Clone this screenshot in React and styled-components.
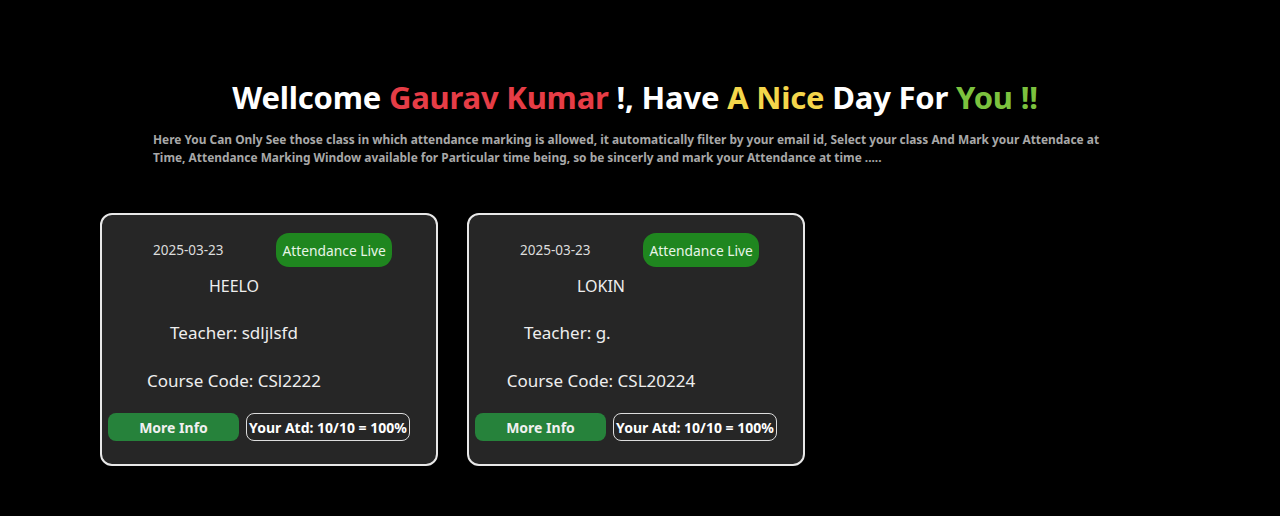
import React from "react";
import styled, { createGlobalStyle } from "styled-components";

const Global = createGlobalStyle`
  html, body {
    margin: 0;
    background: #000;
    font-family: "Noto Sans", "Open Sans", sans-serif;
  }
`;

const Page = styled.div`
  min-height: 516px;
  padding-top: 76px;
  box-sizing: border-box;
`;

const Heading = styled.h1`
  margin: 0;
  padding-right: 10px;
  text-align: center;
  font-size: 31px;
  line-height: 42px;
  font-weight: 700;
  color: #fff;
  letter-spacing: -0.2px;
`;

const Tint = styled.span`
  color: ${(p) => p.$c};
`;

const Intro = styled.p`
  margin: 12px 0 0 153px;
  width: 960px;
  font-size: 11.9px;
  line-height: 18px;
  font-weight: 700;
  color: #a8a8a8;
`;

const CardList = styled.div`
  display: flex;
  gap: 29px;
  margin: 47px 0 0 100px;
`;

const Card = styled.div`
  width: 338px;
  height: 253px;
  box-sizing: border-box;
  border: 2px solid #e8e8e8;
  border-radius: 12px;
  background: #262626;
  padding-top: 18px;
  color: #eee;
`;

const TopRow = styled.div`
  display: flex;
  align-items: center;
  gap: 53px;
  padding-left: 51px;
`;

const DateText = styled.span`
  font-size: 13.5px;
  color: #ddd;
`;

const LiveBadge = styled.span`
  display: inline-flex;
  align-items: center;
  height: 34px;
  padding: 0 6px;
  border-radius: 13px;
  background: #1f861f;
  color: #e8f5e8;
  font-size: 13.8px;
`;

const InfoCol = styled.div`
  width: 264px;
  text-align: center;
`;

const Title = styled.div`
  margin-top: 8px;
  font-size: 16px;
  line-height: 22px;
`;

const InfoLine = styled.div`
  margin-top: 24px;
  font-size: 17px;
  line-height: 24px;
`;

const Hidden = styled.span`
  color: transparent;
`;

const Actions = styled.div`
  display: flex;
  gap: 7px;
  margin: 20px 0 0 6px;
`;

const MoreBtn = styled.button`
  width: 131px;
  height: 28px;
  border: none;
  border-radius: 8px;
  background: #26823b;
  color: #f0f0f0;
  font-family: inherit;
  font-size: 14px;
  font-weight: 700;
`;

const AtdBox = styled.span`
  display: inline-flex;
  align-items: center;
  justify-content: center;
  width: 164px;
  height: 28px;
  box-sizing: border-box;
  border: 1px solid #ddd;
  border-radius: 8px;
  font-size: 14px;
  font-weight: 700;
  color: #fff;
`;

const classes = [
  { date: "2025-03-23", name: "HEELO", teacher: "sdljlsfd", hidden: "", code: "CSl2222" },
  { date: "2025-03-23", name: "LOKIN", teacher: "g.", hidden: " xxxxxxx", code: "CSL20224" },
];

export default function App() {
  return (
    <Page>
      <Global />
      <Heading>
        Wellcome <Tint $c="#e63d46">Gaurav Kumar</Tint> !, Have{" "}
        <Tint $c="#f4d64b">A Nice</Tint> Day For{" "}
        <Tint $c="#7cc23e">You !!</Tint>
      </Heading>
      <Intro>
        Here You Can Only See those class in which attendance marking is allowed, it
        automatically filter by your email id, Select your class And Mark your Attendace at
        Time, Attendance Marking Window available for Particular time being, so be sincerly and
        mark your Attendance at time .....
      </Intro>
      <CardList>
        {classes.map((c) => (
          <Card key={c.name}>
            <TopRow>
              <DateText>{c.date}</DateText>
              <LiveBadge>Attendance Live</LiveBadge>
            </TopRow>
            <InfoCol>
              <Title>{c.name}</Title>
              <InfoLine>
                Teacher: {c.teacher}
                <Hidden>{c.hidden}</Hidden>
              </InfoLine>
              <InfoLine>Course Code: {c.code}</InfoLine>
            </InfoCol>
            <Actions>
              <MoreBtn>More Info</MoreBtn>
              <AtdBox>Your Atd: 10/10 = 100%</AtdBox>
            </Actions>
          </Card>
        ))}
      </CardList>
    </Page>
  );
}
